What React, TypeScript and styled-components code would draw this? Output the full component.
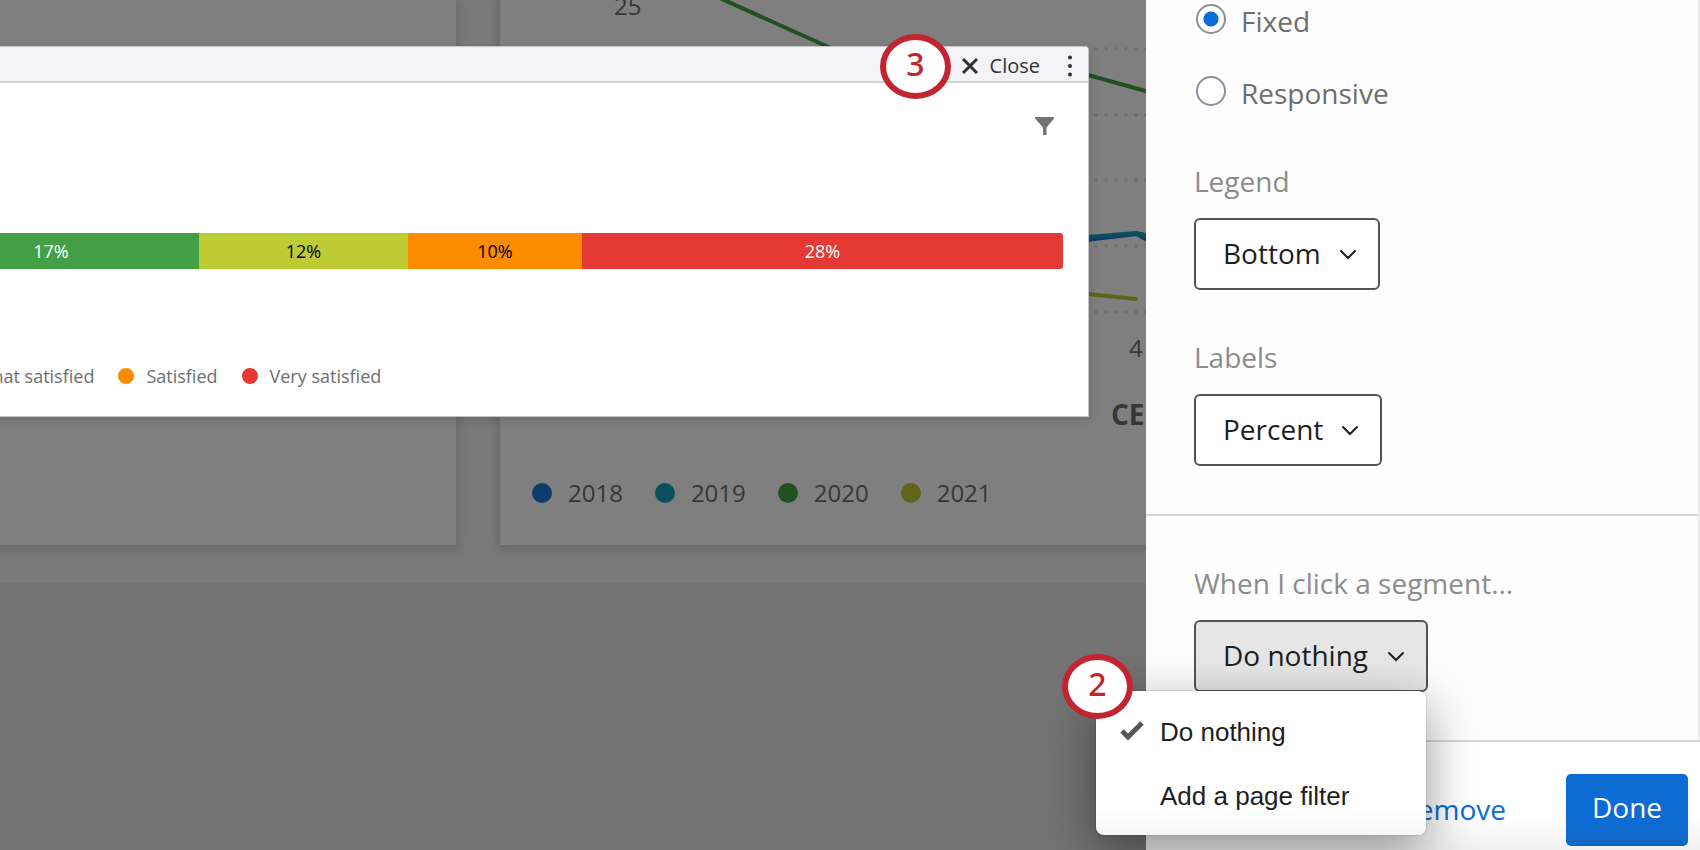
import React, { useState } from "react";
import styled, { createGlobalStyle } from "styled-components";

const GlobalStyle = createGlobalStyle`
  * { box-sizing: border-box; }
  body {
    margin: 0;
    font-family: "Open Sans", "Noto Sans", sans-serif;
    background: #fff;
  }
  button, select { font-family: inherit; }
`;

const Page = styled.div`
  display: flex;
  min-height: 100vh;
  overflow: hidden;
`;

/* ---------- dashboard behind the dialog ---------- */

const Dashboard = styled.main`
  position: relative;
  flex: 1;
  min-width: 0;
  overflow: hidden;
  background: #e6e6e6;
`;

const Cards = styled.div`
  display: grid;
  grid-template-columns: 456px 1fr;
  column-gap: 44px;
  padding-bottom: 38px;
  background: #f2f2f2;
`;

const Card = styled.section`
  height: 545px;
  background: #fff;
  box-shadow: 0 2px 8px 3px rgba(0, 0, 0, 0.13);
  overflow: hidden;
`;

const ChartCard = styled(Card)`
  display: flex;
  flex-direction: column;
`;

const LineChart = styled.svg`
  display: block;
  flex: none;
  width: 646px;
  height: 475px;
  font-size: 24px;
  fill: #6e6e6e;
`;

const YearLegend = styled.ul`
  display: flex;
  gap: 32px;
  margin: 0;
  padding: 0 32px;
  list-style: none;
`;

const YearItem = styled.li`
  display: flex;
  align-items: center;
  gap: 16px;
  font-size: 24px;
  line-height: 36px;
  color: #6e6e6e;
`;

const Dot = styled.span<{ $color: string; $size: number }>`
  flex: none;
  width: ${(p) => p.$size}px;
  height: ${(p) => p.$size}px;
  border-radius: 50%;
  background: ${(p) => p.$color};
`;

const Backdrop = styled.div`
  position: absolute;
  inset: 0;
  background: rgba(0, 0, 0, 0.5);
`;

/* ---------- dialog ---------- */

const Dialog = styled.div`
  position: absolute;
  top: 46px;
  left: -12px;
  right: 57px;
  border: 1px solid #c4c4c8;
  border-radius: 4px 4px 0 0;
  background: #fff;
  box-shadow: 2px 4px 10px rgba(0, 0, 0, 0.12);
`;

const DialogHeader = styled.header`
  display: flex;
  justify-content: flex-end;
  align-items: center;
  gap: 18px;
  height: 36px;
  padding: 4px 6px 0 0;
  border-bottom: 2px solid #d3d3d5;
  border-radius: 3px 3px 0 0;
  background: #f3f2f8;
`;

const CloseButton = styled.button`
  display: flex;
  align-items: center;
  gap: 12px;
  padding: 0;
  border: 0;
  background: none;
  font-size: 20px;
  line-height: 30px;
  color: #2f3235;
`;

const IconButton = styled.button`
  display: flex;
  padding: 0;
  border: 0;
  background: none;
`;

const DialogBody = styled.div`
  display: flex;
  flex-direction: column;
  overflow: hidden;
  padding-bottom: 27px;
`;

const Tools = styled.div`
  display: flex;
  justify-content: flex-end;
  padding: 33px 33px 97px;
`;

const Bar = styled.div`
  display: flex;
  justify-content: flex-end;
  margin-right: 25px;
  height: 36px;
  border-radius: 0 3px 3px 0;
  overflow: hidden;
`;

const Segment = styled.div<{ $color: string; $width: number; $dark?: boolean }>`
  flex: 0 0 ${(p) => p.$width}px;
  background: ${(p) => p.$color};
  color: ${(p) => (p.$dark ? "#000" : "#fff")};
  font-size: 18px;
  line-height: 36px;
  text-align: center;
`;

const AnswerLegend = styled.ul`
  display: flex;
  gap: 24px;
  margin: 94px 0 0 -86px;
  padding: 0;
  list-style: none;
`;

const AnswerItem = styled.li`
  display: flex;
  align-items: center;
  gap: 12px;
  font-size: 18px;
  line-height: 26px;
  white-space: nowrap;
  color: #6e6e6e;
`;

const Badge = styled.span`
  position: absolute;
  z-index: 3;
  display: flex;
  justify-content: center;
  width: 71px;
  height: 65px;
  border: 6px solid #c32432;
  border-radius: 50%;
  background: #fff;
  color: #c32432;
  font-family: "Noto Sans", "Open Sans", sans-serif;
  font-size: 32px;
  font-weight: 500;
  line-height: 48px;
`;

const DialogBadge = styled(Badge)`
  top: -13px;
  right: 137px;
`;

const MenuBadge = styled(Badge)`
  top: -37px;
  left: -34px;
`;

/* ---------- settings panel ---------- */

const Panel = styled.aside`
  display: flex;
  flex-direction: column;
  flex: 0 0 554px;
  background: #fdfdfd;
  font-size: 28px;
  line-height: 34px;
`;

const Settings = styled.div`
  flex: 1;
  border-right: 2px solid #ebebeb;
`;

const Group = styled.section`
  display: flex;
  flex-direction: column;
  gap: 50px;
  padding: 50px 48px 48px;
`;

const SizeGroup = styled(Group)`
  gap: 38px;
  padding: 4px 48px 4px 50px;
`;

const DividedGroup = styled(Group)`
  border-top: 2px solid #d6d6d6;
`;

const RadioLabel = styled.label`
  display: flex;
  align-items: flex-start;
  gap: 15px;
  color: #6e6e6e;
`;

const Radio = styled.input`
  appearance: none;
  width: 30px;
  height: 30px;
  margin: 0;
  border: 2px solid #87909b;
  border-radius: 50%;
  background: #fff;
  &:checked {
    background: radial-gradient(circle, #0b6cd6 0 7px, #fff 8px);
  }
`;

const Field = styled.div`
  position: relative;
  display: flex;
  flex-direction: column;
  align-items: flex-start;
  gap: 20px;
`;

const FieldLabel = styled.label`
  color: #8c8c8c;
`;

const SelectBox = styled.div`
  position: relative;
`;

const Select = styled.select<{ $width: number; $open?: boolean }>`
  display: block;
  appearance: none;
  width: ${(p) => p.$width}px;
  height: 72px;
  padding: 0 0 2px 27px;
  border: 2px solid #50545a;
  border-radius: 6px;
  background: ${(p) => (p.$open ? "#e6e6e6" : "#fff")};
  color: #1e1e1e;
  font-size: 28px;
`;

const Chevron = styled.svg`
  position: absolute;
  top: 31px;
  right: 23px;
  pointer-events: none;
`;

const Menu = styled.ul`
  position: absolute;
  z-index: 2;
  top: 71px;
  left: -98px;
  width: 330px;
  margin: 0;
  padding: 9px 0 7px;
  border-radius: 0 8px 8px 8px;
  list-style: none;
  background: linear-gradient(#fff 80%, #f7f7f7);
  box-shadow: 0 0 2px rgba(0, 0, 0, 0.25), 0 16px 50px rgba(0, 0, 0, 0.42);
`;

const MenuItem = styled.button`
  display: grid;
  grid-template-columns: 24px 1fr;
  align-items: center;
  column-gap: 16px;
  width: 100%;
  height: 64px;
  padding: 0 24px;
  border: 0;
  background: none;
  font-family: "Liberation Sans", Arial, sans-serif;
  font-size: 26px;
  text-align: left;
  color: #1e1e1e;
`;

const Footer = styled.footer`
  display: flex;
  justify-content: flex-end;
  align-items: center;
  gap: 60px;
  padding: 32px 12px 4px;
  border-top: 2px solid #d6d6d6;
  background: linear-gradient(#fff 70%, #f0f0f0);
`;

const RemoveLink = styled.a`
  padding-bottom: 2px;
  color: #0b6cd6;
  text-decoration: none;
`;

const DoneButton = styled.button`
  width: 122px;
  height: 72px;
  padding: 0 0 6px;
  border: 0;
  border-radius: 5px;
  background: linear-gradient(#0d6cd4 60%, #1066c6);
  color: #fff;
  font-size: 28px;
`;

const years = [
  { label: "2018", color: "#1c78d4" },
  { label: "2019", color: "#15a0b8" },
  { label: "2020", color: "#43a047" },
  { label: "2021", color: "#c0ca33" },
];

const segments = [
  { label: "17%", color: "#43a047", width: 296 },
  { label: "12%", color: "#bfcb33", width: 209, dark: true },
  { label: "10%", color: "#fd8c00", width: 174, dark: true },
  { label: "28%", color: "#e53935", width: 481 },
];

const answers = [
  { label: "Somewhat satisfied", color: "#bfcb33" },
  { label: "Satisfied", color: "#fd8c00" },
  { label: "Very satisfied", color: "#e53935" },
];

function Arrow() {
  return (
    <Chevron width="18" height="12" viewBox="0 0 18 12" fill="none" stroke="#1e1e1e" strokeWidth="2">
      <path d="M2 2l7 7L16 2" strokeLinecap="round" />
    </Chevron>
  );
}

function CategoryChart() {
  return (
    <LineChart viewBox="0 0 646 475" aria-label="Results by year">
      <g stroke="#e2e2e2" strokeWidth="4" strokeLinecap="round" strokeDasharray="0 10">
        {[49, 115, 180, 246, 312].map((y) => (
          <line key={y} x1="156" x2="650" y1={y} y2={y} />
        ))}
      </g>
      <g fill="none" strokeWidth="4" strokeLinejoin="round" strokeLinecap="round">
        <path d="M213-5L375 68 480 52 588 75 660 95" stroke="#43a047" />
        <path d="M500 250L637 234 660 248" stroke="#1c78d4" />
        <path d="M500 245L588 237 636 233 660 238" stroke="#15a0b8" />
        <path d="M500 285L588 294 636 299" stroke="#c0ca33" />
      </g>
      <text x="114" y="15">25</text>
      <text x="629" y="357">4</text>
      <text x="611" y="425" fontSize="28" fontWeight="700">CE</text>
    </LineChart>
  );
}

export default function App() {
  const [size, setSize] = useState("fixed");
  const [action, setAction] = useState("Do nothing");
  const [menuOpen, setMenuOpen] = useState(true);
  const actions = ["Do nothing", "Add a page filter"];

  return (
    <Page>
      <GlobalStyle />
      <Dashboard>
        <Cards>
          <Card />
          <ChartCard>
            <CategoryChart />
            <YearLegend>
              {years.map((y) => (
                <YearItem key={y.label}>
                  <Dot $color={y.color} $size={20} />
                  {y.label}
                </YearItem>
              ))}
            </YearLegend>
          </ChartCard>
        </Cards>
        <Backdrop />
        <Dialog role="dialog" aria-label="Satisfaction">
          <DialogHeader>
            <CloseButton type="button">
              <svg width="16" height="16" viewBox="0 0 16 16" fill="none" stroke="#2f3235" strokeWidth="3">
                <path d="M1 1l14 14M15 1L1 15" />
              </svg>
              Close
            </CloseButton>
            <IconButton type="button" aria-label="More options">
              <svg width="24" height="24" viewBox="0 0 24 24" fill="#2f3235">
                <circle cx="12" cy="3.5" r="2" />
                <circle cx="12" cy="12" r="2" />
                <circle cx="12" cy="20.5" r="2" />
              </svg>
            </IconButton>
          </DialogHeader>
          <DialogBody>
            <Tools>
              <IconButton type="button" aria-label="Filter">
                <svg width="20" height="20" viewBox="0 0 20 20" fill="#737373">
                  <path d="M0 1h19v1.500l-7.500 9V19H8v-7.500L0 2.500z" />
                </svg>
              </IconButton>
            </Tools>
            <Bar>
              {segments.map((s) => (
                <Segment key={s.label} $color={s.color} $width={s.width} $dark={s.dark}>
                  {s.label}
                </Segment>
              ))}
            </Bar>
            <AnswerLegend>
              {answers.map((a) => (
                <AnswerItem key={a.label}>
                  <Dot $color={a.color} $size={16} />
                  {a.label}
                </AnswerItem>
              ))}
            </AnswerLegend>
          </DialogBody>
          <DialogBadge>3</DialogBadge>
        </Dialog>
      </Dashboard>

      <Panel>
        <Settings>
          <SizeGroup>
            <RadioLabel>
              <Radio type="radio" name="size" checked={size === "fixed"} onChange={() => setSize("fixed")} />
              Fixed
            </RadioLabel>
            <RadioLabel>
              <Radio type="radio" name="size" checked={size === "responsive"} onChange={() => setSize("responsive")} />
              Responsive
            </RadioLabel>
          </SizeGroup>
          <Group>
            <Field>
              <FieldLabel htmlFor="legend">Legend</FieldLabel>
              <SelectBox>
                <Select id="legend" $width={186}>
                  <option>Bottom</option>
                </Select>
                <Arrow />
              </SelectBox>
            </Field>
            <Field>
              <FieldLabel htmlFor="labels">Labels</FieldLabel>
              <SelectBox>
                <Select id="labels" $width={188}>
                  <option>Percent</option>
                </Select>
                <Arrow />
              </SelectBox>
            </Field>
          </Group>
          <DividedGroup>
            <Field>
              <FieldLabel htmlFor="action">When I click a segment...</FieldLabel>
              <SelectBox>
                <Select
                  id="action"
                  $width={234}
                  $open={menuOpen}
                  value={action}
                  onChange={(e) => setAction(e.target.value)}
                  onMouseDown={(e) => {
                    e.preventDefault();
                    setMenuOpen(!menuOpen);
                  }}
                >
                  {actions.map((a) => (
                    <option key={a}>{a}</option>
                  ))}
                </Select>
                <Arrow />
                {menuOpen && (
                  <Menu>
                    {actions.map((a) => (
                      <li key={a}>
                        <MenuItem
                          type="button"
                          onClick={() => {
                            setAction(a);
                            setMenuOpen(false);
                          }}
                        >
                          <svg width="24" height="24" viewBox="0 0 24 24" fill="none">
                            {a === action && <path d="M2 11l6 6L22 3" stroke="#555" strokeWidth="5" />}
                          </svg>
                          {a}
                        </MenuItem>
                      </li>
                    ))}
                    <MenuBadge as="li">2</MenuBadge>
                  </Menu>
                )}
              </SelectBox>
            </Field>
          </DividedGroup>
        </Settings>
        <Footer>
          <RemoveLink href="#remove">Remove</RemoveLink>
          <DoneButton type="button">Done</DoneButton>
        </Footer>
      </Panel>
    </Page>
  );
}
